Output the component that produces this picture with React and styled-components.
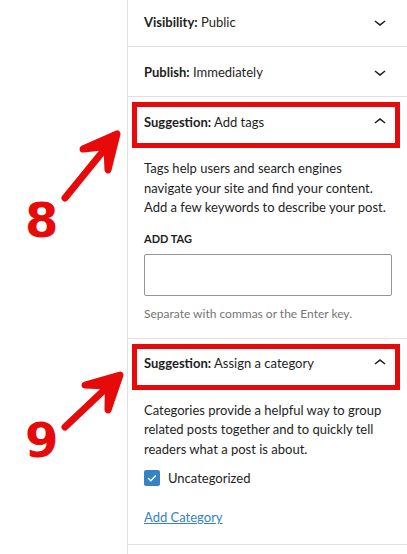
import React from 'react'
import styled, { createGlobalStyle, css } from 'styled-components'

const GlobalStyle = createGlobalStyle`
  html, body {
    margin: 0;
    padding: 0;
    background: #fff;
  }
  body {
    font-family: Lato, "Liberation Sans", Arial, sans-serif;
    color: #1e1e1e;
    -webkit-font-smoothing: antialiased;
  }
`

const RED = '#e60a0a'
const BLUE = '#3582c4'

const Page = styled.div`
  position: relative;
  display: flex;
  width: 407px;
  height: 554px;
  overflow: hidden;
`

const Gutter = styled.div`
  width: 127px;
  flex-shrink: 0;
`

const Sidebar = styled.div`
  width: 279px;
  border-left: 1px solid #e0e0e0;
  margin-top: -3px;
  display: flex;
  flex-direction: column;
`

const Panel = styled.section`
  border-bottom: 1px solid #e0e0e0;
`

const PanelHeader = styled.div`
  position: relative;
  height: 49px;
  display: flex;
  align-items: center;
  justify-content: space-between;
  padding: 0 15px 0 16px;
  font-size: 13px;

  ${p => p.$highlight && css`
    &::after {
      content: '';
      position: absolute;
      top: 5px;
      bottom: -2px;
      left: 4px;
      right: 7px;
      border: 5px solid ${RED};
      pointer-events: none;
    }
  `}
`

const Label = styled.span`
  b {
    font-weight: 700;
  }
`

const PanelBody = styled.div`
  padding: 13px 15px 16px 16px;
  font-size: 13px;
  line-height: 19.5px;
`

const Text = styled.p`
  margin: 0;
`

const FieldLabel = styled.div`
  margin-top: 13px;
  font-size: 11px;
  font-weight: 700;
  line-height: 15px;
  text-transform: uppercase;
`

const TagInput = styled.input`
  display: block;
  box-sizing: border-box;
  width: 100%;
  height: 42px;
  margin-top: 8px;
  border: 1px solid #949494;
  border-radius: 2px;
  background: #fff;
  font: inherit;
`

const Help = styled.div`
  margin-top: 10px;
  font-size: 12px;
  line-height: 16px;
  color: #757575;
`

const CheckRow = styled.label`
  display: flex;
  align-items: center;
  gap: 8px;
  margin-top: 11px;
  line-height: 16px;
`

const Box = styled.span`
  width: 16px;
  height: 16px;
  border-radius: 2px;
  background: ${BLUE};
  display: flex;
  align-items: center;
  justify-content: center;
`

const Link = styled.a`
  display: inline-block;
  margin-top: 21px;
  color: ${BLUE};
  text-decoration: underline;
  line-height: 20px;
`

const Annotation = styled.div`
  position: absolute;
  left: 0;
  top: ${p => p.$top}px;
  width: 127px;
  height: 120px;
`

const Number = styled.span`
  position: absolute;
  left: 25px;
  top: ${p => p.$top}px;
  font-family: "DejaVu Sans", "Liberation Sans", Arial, sans-serif;
  font-weight: 700;
  font-size: 48px;
  line-height: 48px;
  color: ${RED};
`

const Chevron = ({ up }) => (
  <svg width="24" height="24" viewBox="0 0 24 24" fill="#1e1e1e">
    {up
      ? <path d="M6.5 12.4L12 8l5.5 4.4-.9 1.2L12 10l-4.6 3.6-.9-1.2z" />
      : <path d="M17.5 11.6L12 16l-5.5-4.4.9-1.2L12 14l4.6-3.6.9 1.2z" />}
  </svg>
)

// arrow head: tip, two barbs and a notch point back along the shaft
const Arrow = ({ tail, tip, wings }) => {
  const dx = tail[0] - tip[0]
  const dy = tail[1] - tip[1]
  const len = Math.hypot(dx, dy)
  const notch = [tip[0] + (dx / len) * 16, tip[1] + (dy / len) * 16]
  const head = [wings[0], tip, wings[1], notch].map(p => p.join(',')).join(' ')
  return (
    <svg width="127" height="120" style={{ position: 'absolute', left: 0, top: 0 }}>
      <g stroke={RED} strokeWidth="7" strokeLinecap="round" strokeLinejoin="round" fill={RED}>
        <line x1={tail[0]} y1={tail[1]} x2={notch[0]} y2={notch[1]} />
        <polygon points={head} />
      </g>
    </svg>
  )
}

const Header = ({ label, value, open, highlight }) => (
  <PanelHeader $highlight={highlight}>
    <Label><b>{label}:</b> {value}</Label>
    <Chevron up={open} />
  </PanelHeader>
)

export default function App() {
  return (
    <>
      <GlobalStyle />
      <Page>
        <Gutter />
        <Sidebar>
          <Panel>
            <Header label="Visibility" value="Public" />
          </Panel>
          <Panel>
            <Header label="Publish" value="Immediately" />
          </Panel>
          <Panel>
            <Header label="Suggestion" value="Add tags" open highlight />
            <PanelBody>
              <Text>
                Tags help users and search engines navigate your site and find your content.
                Add a few keywords to describe your post.
              </Text>
              <FieldLabel>Add tag</FieldLabel>
              <TagInput type="text" />
              <Help>Separate with commas or the Enter key.</Help>
            </PanelBody>
          </Panel>
          <Panel>
            <Header label="Suggestion" value="Assign a category" open highlight />
            <PanelBody>
              <Text>
                Categories provide a helpful way to group related posts together and to
                quickly tell readers what a post is about.
              </Text>
              <CheckRow>
                <Box>
                  <svg width="12" height="12" viewBox="0 0 12 12">
                    <path d="M2.2 6.2l2.6 2.6L9.8 3.4" stroke="#fff" strokeWidth="1.4" fill="none" />
                  </svg>
                </Box>
                Uncategorized
              </CheckRow>
              <Link href="#">Add Category</Link>
            </PanelBody>
          </Panel>
        </Sidebar>

        <Annotation $top={128}>
          <Arrow tail={[65, 70]} tip={[117, 6]} wings={[[83, 21], [108, 42]]} />
          <Number $top={68}>8</Number>
        </Annotation>
        <Annotation $top={355}>
          <Arrow tail={[65, 72]} tip={[120, 20]} wings={[[85, 30], [108, 55]]} />
          <Number $top={61}>9</Number>
        </Annotation>
      </Page>
    </>
  )
}
